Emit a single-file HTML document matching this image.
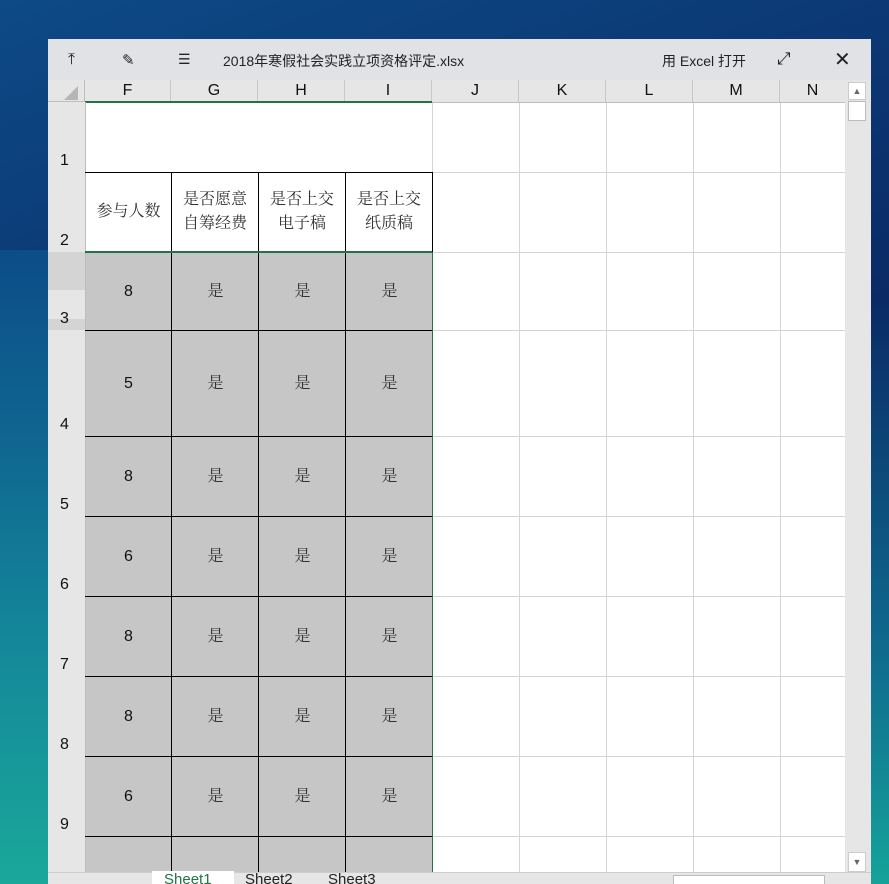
<!DOCTYPE html>
<html><head><meta charset="utf-8"><style>
*{margin:0;padding:0;box-sizing:border-box}
body{width:889px;height:884px;overflow:hidden;position:relative;font-family:"Liberation Sans","Noto Sans CJK SC",sans-serif;
background:linear-gradient(160deg,#0d4a86 0%,#0b3470 35%,#0a2560 60%,#071a50 100%);}
.bgl{position:absolute;left:0;top:250px;width:48px;height:634px;background:linear-gradient(180deg,#0c4d88 0%,#0f6690 30%,#14869a 60%,#1aa89a 100%)}
.bgr{position:absolute;left:871px;top:300px;width:18px;height:584px;background:linear-gradient(180deg,#0a2a66,#0f6a8e 60%,#15a39a)}
.win{position:absolute;left:48px;top:39px;width:823px;height:845px;background:#fff;overflow:hidden}
.title{position:absolute;left:0;top:0;width:823px;height:41px;background:#e0e2e6;font-size:14px;color:#222}
.title span{position:absolute;top:12px}
.c{position:absolute;display:flex;align-items:center;justify-content:center;text-align:center}
.hdr{background:#e6e6e6;color:#111;font-size:16px}
.rh{position:absolute;left:0;width:37px;background:#e6e6e6;border-bottom:1px solid #bdbdbd;font-size:16px;color:#111;padding-left:12px;display:flex;align-items:flex-end;padding-bottom:2px}
.v{position:absolute;width:1px;background:#d4d4d4}
.h{position:absolute;left:37px;height:1px;background:#d4d4d4}
.bv{position:absolute;width:1px;background:#000}
.bh{position:absolute;left:37px;width:347px;height:1px;background:#000}
.t{position:absolute;width:87px;text-align:center;font-size:16px;color:#111;line-height:20px}
.t.cj{font-family:"Liberation Serif","Noto Serif CJK SC",serif;color:#333}
.w{position:absolute;display:flex;align-items:center;justify-content:center;font-family:"Liberation Serif","Noto Serif CJK SC",serif;font-size:16px;color:#333;line-height:24px;text-align:center}
</style></head><body>
<div class="bgl"></div><div class="bgr"></div>
<div class="win">
<div class="title">
<span style="left:20px;font-size:16px">⤒</span>
<span style="left:74px;font-size:15px">✎</span>
<span style="left:130px;font-size:14px">☰</span>
<span style="left:175px">2018年寒假社会实践立项资格评定.xlsx</span>
<span style="left:614px">用 Excel 打开</span>
<span style="left:729px;font-size:17px;top:10px">⤢</span>
<span style="left:786px;font-size:20px;top:8px;font-weight:300">✕</span>
</div>
<div style="position:absolute;left:0;top:41px;width:797px;height:804px;background:#fff">
<div class="c hdr" style="left:0;top:0;width:37px;height:22px;border-right:1px solid #bdbdbd;border-bottom:1px solid #bdbdbd"><div style="width:0;height:0;border-left:14px solid transparent;border-bottom:14px solid #b5b5b5;margin:4px 0 0 10px"></div></div>
<div class="c hdr" style="left:37px;top:0;width:86px;height:22px;border-right:1px solid #c8c8c8">F</div>
<div class="c hdr" style="left:123px;top:0;width:87px;height:22px;border-right:1px solid #c8c8c8">G</div>
<div class="c hdr" style="left:210px;top:0;width:87px;height:22px;border-right:1px solid #c8c8c8">H</div>
<div class="c hdr" style="left:297px;top:0;width:87px;height:22px;border-right:1px solid #c8c8c8">I</div>
<div class="c hdr" style="left:384px;top:0;width:87px;height:22px;border-right:1px solid #c8c8c8">J</div>
<div class="c hdr" style="left:471px;top:0;width:87px;height:22px;border-right:1px solid #c8c8c8">K</div>
<div class="c hdr" style="left:558px;top:0;width:87px;height:22px;border-right:1px solid #c8c8c8">L</div>
<div class="c hdr" style="left:645px;top:0;width:87px;height:22px;border-right:1px solid #c8c8c8">M</div>
<div class="c hdr" style="left:732px;top:0;width:65px;height:22px">N</div>
<div style="position:absolute;left:37px;top:22px;width:760px;height:1px;background:#bdbdbd"></div>
<div style="position:absolute;left:37px;top:21px;width:347px;height:2px;background:#217346"></div>
<div class="rh" style="top:22px;height:71px">1</div>
<div class="rh" style="top:92px;height:81px">2</div>
<div class="rh" style="top:172px;height:79px;background:linear-gradient(#d4d4d4 0,#d4d4d4 38px,#e6e6e6 38px,#e6e6e6 67px,#d4d4d4 67px)">3</div>
<div class="rh" style="top:250px;height:107px">4</div>
<div class="rh" style="top:356px;height:81px">5</div>
<div class="rh" style="top:436px;height:81px">6</div>
<div class="rh" style="top:516px;height:81px">7</div>
<div class="rh" style="top:596px;height:81px">8</div>
<div class="rh" style="top:676px;height:81px">9</div>
<div class="rh" style="top:756px;height:60px"></div>
<div style="position:absolute;left:37px;top:22px;width:1px;height:782px;background:#bdbdbd"></div>
<div class="v" style="left:471px;top:23px;height:781px"></div>
<div class="v" style="left:558px;top:23px;height:781px"></div>
<div class="v" style="left:645px;top:23px;height:781px"></div>
<div class="v" style="left:732px;top:23px;height:781px"></div>
<div class="v" style="left:384px;top:23px;height:70px"></div>
<div class="h" style="top:92px;width:760px"></div>
<div class="h" style="top:172px;width:760px"></div>
<div class="h" style="top:250px;width:760px"></div>
<div class="h" style="top:356px;width:760px"></div>
<div class="h" style="top:436px;width:760px"></div>
<div class="h" style="top:516px;width:760px"></div>
<div class="h" style="top:596px;width:760px"></div>
<div class="h" style="top:676px;width:760px"></div>
<div class="h" style="top:756px;width:760px"></div>
<div style="position:absolute;left:38px;top:172px;width:346px;height:632px;background:#c6c6c6"></div>
<div class="bh" style="top:92px"></div>
<div class="bh" style="top:250px"></div>
<div class="bh" style="top:356px"></div>
<div class="bh" style="top:436px"></div>
<div class="bh" style="top:516px"></div>
<div class="bh" style="top:596px"></div>
<div class="bh" style="top:676px"></div>
<div class="bh" style="top:756px"></div>
<div class="bv" style="left:123px;top:92px;height:712px"></div>
<div class="bv" style="left:210px;top:92px;height:712px"></div>
<div class="bv" style="left:297px;top:92px;height:712px"></div>
<div class="bv" style="left:384px;top:92px;height:80px"></div>
<div class="w" style="left:37px;top:92px;width:87px;height:80px">参与人数</div>
<div class="w" style="left:123px;top:92px;width:88px;height:80px">是否愿意<br>自筹经费</div>
<div class="w" style="left:210px;top:92px;width:88px;height:80px">是否上交<br>电子稿</div>
<div class="w" style="left:297px;top:92px;width:88px;height:80px">是否上交<br>纸质稿</div>
<div style="position:absolute;left:37px;top:171px;width:347px;height:2px;background:#217346"></div>
<div style="position:absolute;left:384px;top:172px;width:1px;height:632px;background:#217346"></div>
<div class="t" style="left:37px;top:202px">8</div><div class="t cj" style="left:124px;top:202px">是</div><div class="t cj" style="left:211px;top:202px">是</div><div class="t cj" style="left:298px;top:202px">是</div>
<div class="t" style="left:37px;top:294px">5</div><div class="t cj" style="left:124px;top:294px">是</div><div class="t cj" style="left:211px;top:294px">是</div><div class="t cj" style="left:298px;top:294px">是</div>
<div class="t" style="left:37px;top:387px">8</div><div class="t cj" style="left:124px;top:387px">是</div><div class="t cj" style="left:211px;top:387px">是</div><div class="t cj" style="left:298px;top:387px">是</div>
<div class="t" style="left:37px;top:467px">6</div><div class="t cj" style="left:124px;top:467px">是</div><div class="t cj" style="left:211px;top:467px">是</div><div class="t cj" style="left:298px;top:467px">是</div>
<div class="t" style="left:37px;top:547px">8</div><div class="t cj" style="left:124px;top:547px">是</div><div class="t cj" style="left:211px;top:547px">是</div><div class="t cj" style="left:298px;top:547px">是</div>
<div class="t" style="left:37px;top:627px">8</div><div class="t cj" style="left:124px;top:627px">是</div><div class="t cj" style="left:211px;top:627px">是</div><div class="t cj" style="left:298px;top:627px">是</div>
<div class="t" style="left:37px;top:707px">6</div><div class="t cj" style="left:124px;top:707px">是</div><div class="t cj" style="left:211px;top:707px">是</div><div class="t cj" style="left:298px;top:707px">是</div>
<div style="position:absolute;left:797px;top:0;width:26px;height:804px;background:#e6e6e6"></div>
<div style="position:absolute;left:800px;top:2px;width:18px;height:18px;background:#fff;border:1px solid #ccc;font-size:9px;color:#666;text-align:center;line-height:16px">▲</div>
<div style="position:absolute;left:800px;top:21px;width:18px;height:20px;background:#fff;border:1px solid #bbb"></div>
<div style="position:absolute;left:800px;top:772px;width:18px;height:20px;background:#fff;border:1px solid #ccc;font-size:9px;color:#666;text-align:center;line-height:18px">▼</div>
</div>
<div style="position:absolute;left:0;top:833px;width:823px;height:12px;background:#e6e6e6;border-top:1px solid #ccc;font-size:15px;color:#222">
<div style="position:absolute;left:104px;top:-2px;width:82px;height:16px;background:#fff;color:#217346;padding-left:12px">Sheet1</div>
<div style="position:absolute;left:197px;top:-2px;color:#222">Sheet2</div>
<div style="position:absolute;left:280px;top:-2px;color:#222">Sheet3</div>
<div style="position:absolute;left:625px;top:2px;width:152px;height:10px;background:#fff;border:1px solid #bbb"></div>
</div>
</div>
</body></html>
